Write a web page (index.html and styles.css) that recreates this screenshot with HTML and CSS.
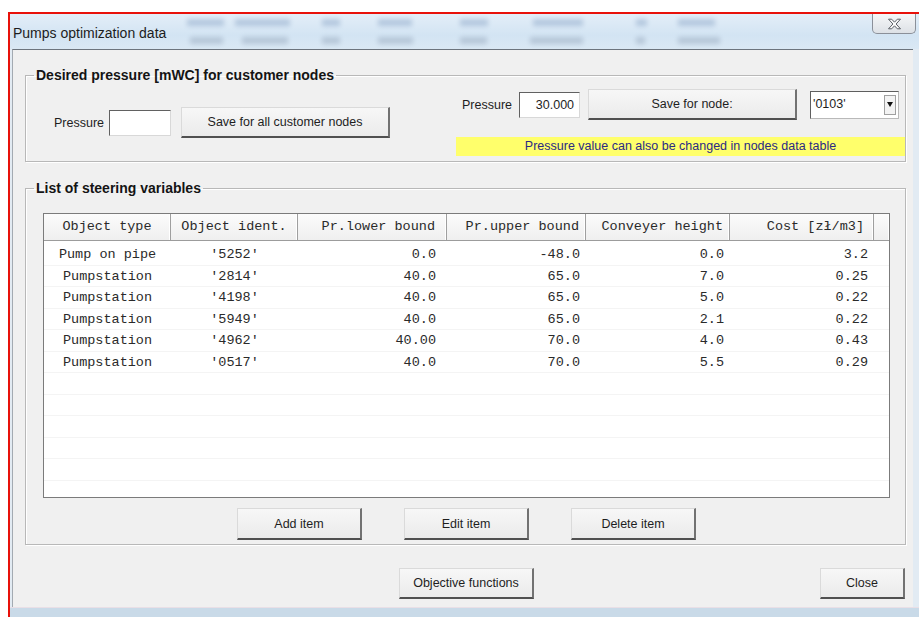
FILE: index.html
```html
<!DOCTYPE html>
<html lang="en">
<head>
<meta charset="utf-8">
<title>Pumps optimization data</title>
<link rel="stylesheet" href="styles.css">
</head>
<body>
<div class="desk">
  <div class="window">
    <div class="titlebar">
      <div class="ghosts"></div>
      <span class="title">Pumps optimization data</span>
      <button class="close-btn" type="button" aria-label="Close">
        <svg width="15" height="12" viewBox="0 0 15 12">
          <path d="M1.5 1.2h3.2l2.8 3 2.8-3h3.2l-4.4 4.8 4.4 4.8h-3.2l-2.8-3-2.8 3H1.5l4.4-4.8z" fill="#fbfbfb" stroke="#5b5f66" stroke-width="1" stroke-linejoin="round"/>
        </svg>
      </button>
    </div>

    <div class="client">
      <fieldset class="group">
        <legend>Desired pressure [mWC] for customer nodes</legend>
        <div class="pressure">
          <div class="all-nodes">
            <span class="lbl">Pressure</span>
            <div class="field field-all"></div>
            <button class="btn btn-all" type="button">Save for all customer nodes</button>
          </div>
          <div class="one-node">
            <div class="node-row">
              <span class="lbl lbl-node">Pressure</span>
              <div class="field field-node">30.000</div>
              <button class="btn btn-node" type="button">Save for node:</button>
              <div class="combo">
                <span class="combo-value">'0103'</span>
                <span class="combo-arrow"><span class="tri"></span></span>
              </div>
            </div>
            <div class="hint">Pressure value can also be changed in nodes data table</div>
          </div>
        </div>
      </fieldset>

      <fieldset class="group group-list">
        <legend>List of steering variables</legend>
        <div class="grid">
          <div class="grid-head">
            <div class="hc c-center">Object type</div>
            <div class="hc c-center">Object ident.</div>
            <div class="hc c-lower">Pr.lower bound</div>
            <div class="hc c-upper">Pr.upper bound</div>
            <div class="hc c-height">Conveyer height</div>
            <div class="hc c-cost-h">Cost [zł/m3]</div>
            <div class="hc hc-fill"></div>
          </div>
          <div class="grid-body">
            <div class="grid-row"><div class="c-center">Pump on pipe</div><div class="c-center">'5252'</div><div class="c-lower">0.0</div><div class="c-upper">-48.0</div><div class="c-height">0.0</div><div class="c-cost">3.2</div><div></div></div>
            <div class="grid-row"><div class="c-center">Pumpstation</div><div class="c-center">'2814'</div><div class="c-lower">40.0</div><div class="c-upper">65.0</div><div class="c-height">7.0</div><div class="c-cost">0.25</div><div></div></div>
            <div class="grid-row"><div class="c-center">Pumpstation</div><div class="c-center">'4198'</div><div class="c-lower">40.0</div><div class="c-upper">65.0</div><div class="c-height">5.0</div><div class="c-cost">0.22</div><div></div></div>
            <div class="grid-row"><div class="c-center">Pumpstation</div><div class="c-center">'5949'</div><div class="c-lower">40.0</div><div class="c-upper">65.0</div><div class="c-height">2.1</div><div class="c-cost">0.22</div><div></div></div>
            <div class="grid-row"><div class="c-center">Pumpstation</div><div class="c-center">'4962'</div><div class="c-lower">40.00</div><div class="c-upper">70.0</div><div class="c-height">4.0</div><div class="c-cost">0.43</div><div></div></div>
            <div class="grid-row"><div class="c-center">Pumpstation</div><div class="c-center">'0517'</div><div class="c-lower">40.0</div><div class="c-upper">70.0</div><div class="c-height">5.5</div><div class="c-cost">0.29</div><div></div></div>
            <div class="grid-row"></div>
            <div class="grid-row"></div>
            <div class="grid-row"></div>
            <div class="grid-row"></div>
            <div class="grid-row"></div>
            <div class="grid-row"></div>
          </div>
        </div>
        <div class="item-buttons">
          <button class="btn btn-item" type="button">Add item</button>
          <button class="btn btn-item" type="button">Edit item</button>
          <button class="btn btn-item" type="button">Delete item</button>
        </div>
      </fieldset>

      <div class="footer">
        <button class="btn btn-objective" type="button">Objective functions</button>
        <button class="btn btn-close" type="button">Close</button>
      </div>
    </div>

    <div class="frame-bottom"></div>
  </div>
</div>
</body>
</html>
```

FILE: styles.css
```css
html, body {
  margin: 0;
  background: #ffffff;
}

body {
  font-family: "Liberation Sans", Arial, sans-serif;
  color: #1e1e1e;
}

.desk {
  box-sizing: border-box;
  height: 617px;
  padding: 12px 0 0 8px;
  overflow: hidden;
}

/* dialog window with its highlighted outline */
.window {
  height: 603px;
  display: flex;
  flex-direction: column;
  border-top: 2px solid #e8110a;
  border-left: 2px solid #e8110a;
  background: #e2ebf3;
}

/* glass title bar with the blurred desktop behind it */
.titlebar {
  position: relative;
  flex: none;
  height: 35px;
  display: flex;
  justify-content: space-between;
  align-items: flex-start;
  background: linear-gradient(#e3eef8, #d3e4f3 60%, #dae8f4);
  overflow: hidden;
}

.ghosts {
  position: absolute;
  inset: 0;
  filter: blur(2.4px);
  opacity: 0.32;
  background-repeat: no-repeat;
  background-image:
    linear-gradient(#5f80ad, #5f80ad), linear-gradient(#5f80ad, #5f80ad),
    linear-gradient(#5f80ad, #5f80ad), linear-gradient(#5f80ad, #5f80ad),
    linear-gradient(#5f80ad, #5f80ad), linear-gradient(#5f80ad, #5f80ad),
    linear-gradient(#5f80ad, #5f80ad), linear-gradient(#5f80ad, #5f80ad),
    linear-gradient(#74879f, #74879f), linear-gradient(#74879f, #74879f),
    linear-gradient(#74879f, #74879f), linear-gradient(#74879f, #74879f),
    linear-gradient(#74879f, #74879f), linear-gradient(#74879f, #74879f),
    linear-gradient(#74879f, #74879f), linear-gradient(#74879f, #74879f);
  background-size:
    37px 7px, 55px 7px, 18px 7px, 34px 7px, 28px 7px, 50px 7px, 11px 7px, 37px 7px,
    33px 7px, 46px 7px, 18px 7px, 35px 7px, 27px 7px, 53px 7px, 9px 7px, 42px 7px;
  background-position:
    177px 5px, 225px 5px, 312px 5px, 368px 5px, 450px 5px, 523px 5px, 626px 5px, 668px 5px,
    180px 23px, 232px 23px, 312px 23px, 368px 23px, 450px 23px, 520px 23px, 626px 23px, 668px 23px;
}

.title {
  position: relative;
  padding: 11px 0 0 3px;
  font-size: 14px;
  line-height: 16px;
  color: #1c1c1c;
}

.close-btn {
  position: relative;
  box-sizing: border-box;
  width: 44px;
  height: 20px;
  margin-right: 3px;
  padding: 0;
  display: flex;
  align-items: center;
  justify-content: center;
  border: 1px solid #8b9099;
  border-top: 0;
  border-radius: 0 0 5px 5px;
  background: linear-gradient(#f6f7f8, #dde1e6);
}

/* client area of the dialog */
.client {
  flex: none;
  height: 557px;
  margin: 0 6px 0 2px;
  display: flex;
  flex-direction: column;
  border-top: 1px solid #6c747d;
  border-left: 1px solid #a3aab1;
  background: #f0f0f0;
}

.frame-bottom {
  flex: 1;
  border-top: 1px solid #e9dfe6;
  background: #c9dae8;
}

/* group boxes */
.group {
  margin: 17px 7px 0 12px;
  padding: 0;
  min-width: 0;
  border: 1px solid #b8b8b8;
  box-shadow: inset 1px 1px 0 #ffffff, 1px 1px 0 #ffffff;
}

.group legend {
  margin-left: 8px;
  padding: 0 2px;
  font-size: 14px;
  font-weight: bold;
  line-height: 16px;
  color: #141414;
}

.group-list {
  margin-top: 18px;
}

.pressure {
  height: 78px;
  display: flex;
  align-items: flex-start;
}

.all-nodes {
  display: flex;
  align-items: center;
  margin: 24px 0 0 28px;
}

.lbl {
  font-size: 12.5px;
  line-height: 16px;
}

.field {
  box-sizing: border-box;
  height: 26px;
  padding-right: 5px;
  border: 1px solid;
  border-color: #616161 #d8d8d8 #d8d8d8 #616161;
  background: #ffffff;
  font-size: 12.5px;
  line-height: 24px;
  text-align: right;
  color: #1e1e1e;
}

.field-all {
  width: 62px;
  margin-left: 5px;
}

.btn {
  box-sizing: border-box;
  height: 31px;
  padding: 0;
  border-style: solid;
  border-width: 1px 2px 2px 1px;
  border-color: #dadada #727272 #505050 #dadada;
  background: linear-gradient(#f7f7f7, #ebebeb);
  font-family: "Liberation Sans", Arial, sans-serif;
  font-size: 12.5px;
  color: #1e1e1e;
}

.btn-all {
  width: 209px;
  margin-left: 10px;
}

.one-node {
  width: 449px;
  margin: 6px 0 0 auto;
}

.node-row {
  height: 31px;
  display: flex;
  align-items: center;
}

.lbl-node {
  margin-left: 6px;
}

.field-node {
  width: 61px;
  margin-left: 7px;
}

.btn-node {
  width: 209px;
  margin-left: 8px;
}

.combo {
  box-sizing: border-box;
  width: 89px;
  height: 28px;
  margin-left: 13px;
  display: flex;
  border: 1px solid;
  border-color: #5e5e5e #b9b9b9 #b9b9b9 #5e5e5e;
  background: #ffffff;
}

.combo-value {
  flex: 1;
  padding-left: 2px;
  font-size: 12.5px;
  line-height: 25px;
}

.combo-arrow {
  box-sizing: border-box;
  width: 12px;
  margin: 3px 2px 3px 0;
  display: flex;
  align-items: center;
  justify-content: center;
  border: 1px solid #a0a0a0;
  background: #f3f3f3;
}

.tri {
  width: 0;
  height: 0;
  border-left: 3.5px solid transparent;
  border-right: 3.5px solid transparent;
  border-top: 5px solid #111111;
}

.hint {
  height: 19px;
  margin-top: 17px;
  background: #ffff6b;
  font-size: 12.5px;
  line-height: 19px;
  text-align: center;
  color: #2a2a84;
}

/* steering variables table */
.grid {
  box-sizing: border-box;
  width: 847px;
  height: 285px;
  margin: 17px 0 0 17px;
  border: 1px solid #7b7b7b;
  background: #ffffff;
  overflow: hidden;
  font-family: "Liberation Mono", "Courier New", monospace;
  font-size: 13.5px;
  color: #2a2a2a;
}

.grid-head,
.grid-row {
  display: grid;
  grid-template-columns: 127px 127px 149px 139px 144px 144px 1fr;
}

.grid-head {
  box-sizing: border-box;
  height: 27px;
  border-bottom: 1px solid #9c9c9c;
  background: linear-gradient(#fcfcfc, #efefef);
}

.hc {
  border-right: 1px solid #9f9f9f;
  box-shadow: inset -1px 0 0 #ffffff;
  line-height: 26px;
  white-space: nowrap;
  overflow: hidden;
}

.hc-fill {
  border-right: 0;
}

.grid-body {
  padding-top: 3px;
}

.grid-row {
  box-sizing: border-box;
  height: 21.5px;
  border-bottom: 1px solid #f4f4f4;
  line-height: 21px;
  white-space: nowrap;
}

.c-center {
  text-align: center;
}

.c-lower {
  text-align: right;
  padding-right: 11px;
}

.c-upper {
  text-align: right;
  padding-right: 6px;
}

.c-height {
  text-align: right;
  padding-right: 6px;
}

.c-cost-h {
  text-align: right;
  padding-right: 9px;
}

.c-cost {
  text-align: right;
  padding-right: 6px;
}

.item-buttons {
  display: flex;
  gap: 42px;
  margin: 10px 0 4px 211px;
}

.btn-item {
  width: 125px;
  height: 32px;
}

/* bottom row of the dialog */
.footer {
  display: flex;
  margin-top: 23px;
}

.btn-objective {
  width: 135px;
  margin-left: 386px;
}

.btn-close {
  width: 85px;
  margin: 0 8px 0 auto;
}
```
